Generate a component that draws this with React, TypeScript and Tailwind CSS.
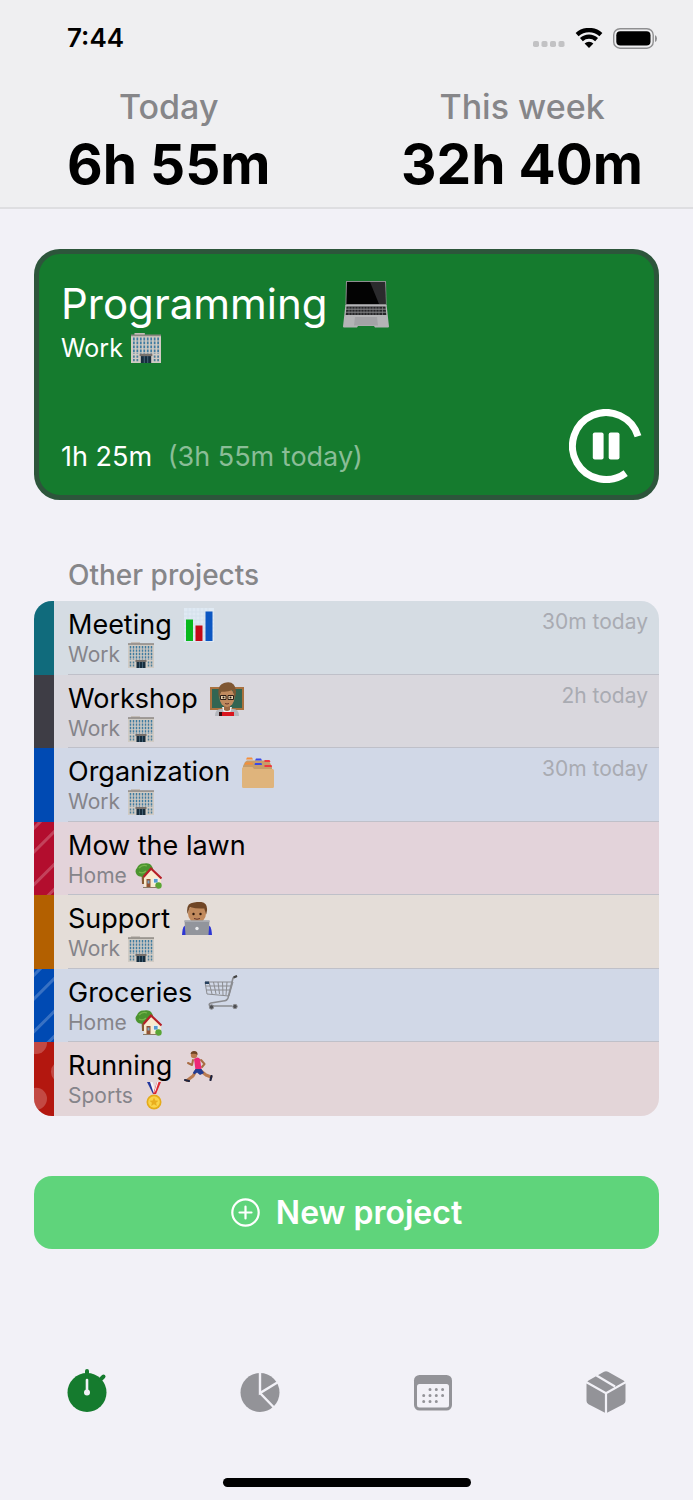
import type { ReactNode } from "react";

type EmojiProps = { className: string };

const Laptop = ({ className }: EmojiProps) => (
  <svg viewBox="0 0 46 47" className={className} role="img" aria-label="laptop">
    <path d="M3 0h40l.6 25H2.4z" fill="#8d8d8f" />
    <path d="M4 1h38l.6 22H3.4z" fill="#030303" />
    <path d="M27 1h15l.5 22H36z" fill="#2b2b2d" />
    <path d="M2.4 24h41.200L46 45.500q0 1-1 1H32l-1-1.500H15l-1 1.500H1q-1 0-1-1z" fill="#b4b4b6" />
    <path d="M3.500 25.500h39l.8 8.500H2.700z" fill="#262628" />
    <path d="M3 28.200h40M3 31.200h40" stroke="#a2a2a5" strokeWidth=".8" />
    <path d="M6 25.500v8.500M9 25.500v8.500M12 25.500v8.500M15 25.500v8.500M18 25.500v8.500M21 25.500v8.500M24 25.500v8.500M27 25.500v8.500M30 25.500v8.500M33 25.500v8.500M36 25.500v8.500M39.500 25.500v8.500" stroke="#8b8b8e" strokeWidth=".6" />
    <path d="M12 36h22l1 8.500H11z" fill="#a3a3a6" />
  </svg>
);

const Office = ({ className }: EmojiProps) => (
  <svg viewBox="0 0 26 26" className={className} role="img" aria-label="office">
    <path d="M3 0h9v2H3z" fill="#c4bdb7" />
    <path d="M0 2h26v24H0z" fill="#d0cbc4" />
    <path d="M0 1.300h26v1.500H0z" fill="#8c8783" />
    <path d="M2.500 4v14M5.500 4v14M8.500 4v14M11.500 4v14M14.500 4v14M17.500 4v14M20.500 4v14M23.500 4v14" stroke="#3f7ba0" strokeWidth="1.500" strokeDasharray="2.400 1" />
    <path d="M2.500 19.500v5M5.500 19.500v5M20.500 19.500v5M23.500 19.500v5" stroke="#4c7f9b" strokeWidth="1.500" strokeDasharray="2 1" />
    <path d="M7.500 18h11v2h-11z" fill="#77706b" />
    <path d="M8.500 20h9v6h-9z" fill="#172d3d" />
    <path d="M11.500 20v6M14.500 20v6" stroke="#54758a" strokeWidth=".7" />
  </svg>
);

const Chart = ({ className }: EmojiProps) => (
  <svg viewBox="0 0 30 34" className={className} role="img" aria-label="bar chart">
    <path d="M0 0h30v34H0z" fill="#dfe9f3" />
    <path d="M0 4h30M0 8h30M0 12h30M0 16h30M0 20h30M0 24h30M0 28h30M4 0v34M8 0v34M12 0v34M16 0v34M20 0v34M24 0v34" stroke="#d0deea" strokeWidth=".6" />
    <path d="M2 11.500h7V33H2z" fill="#08b91d" />
    <path d="M11.500 17.500h7V33h-7z" fill="#c30a17" />
    <path d="M21.500 3.500h7V33h-7z" fill="#0c57c2" />
  </svg>
);

const Teacher = ({ className }: EmojiProps) => (
  <svg viewBox="0 0 34 34" className={className} role="img" aria-label="teacher">
    <path d="M0 5h34v23H0z" fill="#a9713f" />
    <path d="M2 7h30v19H2z" fill="#326552" />
    <path d="M5 34q0-7 6-7h12q6 0 6 7z" fill="#b4b7bd" />
    <path d="M12 25h10l-2 6h-6z" fill="#eeeeee" />
    <path d="M10 30h14v4H10z" fill="#d9151e" />
    <path d="M9 30h3v4H9z" fill="#351012" />
    <path d="M14 22h6v6q-3 2-6 0z" fill="#9c6844" />
    <ellipse cx="17" cy="15.500" rx="7.500" ry="9.500" fill="#c08a5e" />
    <path d="M9 16Q6.500 3 14 1q11-3 12 8 0 5-1.500 7-.5-5-2-8-6 2.500-11 1.500-2 2-2.500 6.500z" fill="#7f5733" />
    <path d="M10.500 13.500h5.500v4h-5.500zM18 13.500h5.500v4H18z" fill="#ecd3ae" stroke="#2c1e18" strokeWidth="1" />
    <circle cx="13.500" cy="15.500" r="1" fill="#24150d" />
    <circle cx="20.500" cy="15.500" r="1" fill="#24150d" />
    <path d="M15 21.500q2 1 4 0" stroke="#65352a" strokeWidth="1" fill="none" />
  </svg>
);

const Folder = ({ className }: EmojiProps) => (
  <svg viewBox="0 0 32 31" className={className} role="img" aria-label="card index dividers">
    <path d="M3 5 5 3.500h22l3 6.500v5H1V9z" fill="#c79d69" />
    <path d="M5 .5h5l1 2H4zM3.500 5.500h7l.5 2H2.500z" fill="#f58e39" />
    <path d="M14 1.500h5l1 2h-7zM13 6h6.500l.5 2h-7.500z" fill="#3949e7" />
    <path d="M22.500 3h5l1 2h-6zM22.500 8h7l.5 2h-7.500z" fill="#ee3940" />
    <path d="M0 11.500q0-1.500 1.500-1.500h9l1.500 2h18.500q1.500 0 1.500 1.500v16q0 1.500-1.500 1.500h-29Q0 31 0 29.500z" fill="#dfb47c" />
  </svg>
);

const House = ({ className }: EmojiProps) => (
  <svg viewBox="0 0 27 26" className={className} role="img" aria-label="house with garden">
    <path d="M6.500 10h3l.5 11H7z" fill="#875a33" />
    <path d="M2 12Q-1 8 2 5 4 0 9 .5q6-1 8 3 3 4-1 8-4 3-7 2-5 1-7-1.500z" fill="#4b942f" />
    <path d="M4 5q4-4 8-2M4 9q4 2 7-1" stroke="#77b64b" strokeWidth="1.300" fill="none" />
    <path d="M9 13 17 6l9 9v9.500l-17-1z" fill="#f8ebcf" />
    <path d="M8.500 14 16 5.500l10.500 10" stroke="#b51f28" strokeWidth="2.200" fill="none" />
    <path d="M11.500 16h4v8h-4z" fill="#925333" />
    <path d="M12.500 17.500h2v3h-2z" fill="#78a5c5" />
    <path d="M18.500 15.500h4.500v4.500h-4.500z" fill="#559bd0" stroke="#fff" strokeWidth=".7" />
    <circle cx="23.500" cy="22.500" r="3.200" fill="#5aa535" />
    <path d="M8 24.500h14" stroke="#8b7b67" strokeWidth="1" />
  </svg>
);

const Technologist = ({ className }: EmojiProps) => (
  <svg viewBox="0 0 30 34" className={className} role="img" aria-label="technologist">
    <path d="M0 33q0-11 8-12h14q8 1 8 12z" fill="#2d36d3" />
    <path d="M11 17h8v6h-8z" fill="#99643f" />
    <ellipse cx="15" cy="11.500" rx="9" ry="9.500" fill="#c18a5d" />
    <path d="M5.500 12Q3.500 1 12 .5q14-3 13 8l-.8 4-2-6Q14 7 8 5q-1.500 3-2.500 7z" fill="#704626" />
    <circle cx="11.500" cy="12" r="1.200" fill="#2b160b" />
    <circle cx="18.500" cy="12" r="1.200" fill="#2b160b" />
    <path d="M12 16.500q3 1.500 6 0" stroke="#65352a" strokeWidth="1" fill="none" />
    <path d="M2.500 18.500h25L26.500 33h-23z" fill="#92959c" />
    <path d="M2.500 18.500h25v1.500h-25z" fill="#a9abb0" />
    <circle cx="15" cy="26.500" r="1.700" fill="#e9eaec" />
  </svg>
);

const Cart = ({ className }: EmojiProps) => (
  <svg viewBox="0 0 34 35" className={className} role="img" aria-label="shopping cart" fill="none" stroke="#8b8c90" strokeWidth="1">
    <path d="M1 7h28l-4 14-22-2zM2 11h26M2 15h25M5 7l3 12M9.500 7l2.500 12M14 7l1.500 12M18.500 7l.5 13M23 7l-1 13" />
    <path d="M33 1l-4 2-5 20q-1 3-5 3L7 28q-3 1-1 3h22" strokeWidth="1.600" />
    <path d="M33 1l-3.500 1.500" stroke="#444" strokeWidth="2" />
    <path d="M1 6.500h4v2.500H1z" fill="#26405e" stroke="none" />
    <circle cx="7.500" cy="32" r="2.200" fill="#4f5054" />
    <circle cx="31" cy="31.500" r="2.200" fill="#4f5054" />
  </svg>
);

const Runner = ({ className }: EmojiProps) => (
  <svg viewBox="0 0 29 31" className={className} role="img" aria-label="runner" fill="none" strokeLinecap="round" strokeLinejoin="round">
    <path d="M9 9l-1 5-4-2M17 9l3.500 4-2.500 3" stroke="#a96c43" strokeWidth="2" />
    <path d="M12 20l-3 5-6 4.500M17 20l5 4 5 2" stroke="#b97b50" strokeWidth="3" />
    <path d="M10 8q4-3 6 0l1.500 10-6 1z" fill="#ed2877" />
    <path d="M11.500 18h6l2.500 4-4 2-3-2.500-3 2-1-2z" fill="#223d93" />
    <circle cx="10" cy="4" r="3.200" fill="#b97b50" />
    <path d="M6.500 3Q7 0 10 0q4 0 3.500 4-2-2-7-1z" fill="#714524" />
    <path d="M1 29l4 1M27.500 25l-1 4" stroke="#20243e" strokeWidth="2.200" />
  </svg>
);

const Medal = ({ className }: EmojiProps) => (
  <svg viewBox="0 0 18 28" className={className} role="img" aria-label="medal">
    <path d="M2 0h4l5 12H8z" fill="#23379c" />
    <path d="M5 0h2.500L10 8 9 12z" fill="#f4f4f6" />
    <path d="M16 0h-4L8 12h3z" fill="#dc2732" />
    <path d="M12 0h1.500L10.500 9 9 11z" fill="#f4f4f6" />
    <circle cx="9" cy="20" r="7.500" fill="#e5ab1a" />
    <circle cx="9" cy="20" r="5.800" fill="#fad449" />
    <path d="m9 15.500 1.300 2.900 3.200.3-2.400 2.100.7 3.200L9 22.300 6.200 24l.7-3.200-2.400-2.100 3.200-.3z" fill="#e9ae1e" />
  </svg>
);

const Stripes = () => (
  <svg viewBox="0 0 20 74" className="h-0 min-h-full w-full" stroke="#fff" strokeOpacity=".22" strokeWidth="3" aria-hidden>
    <path d="M-2 8 8-2M-2 32 22 8M-2 65 22 41M-2 98 22 74M8 80 22 66" />
  </svg>
);

const Dots = () => (
  <svg viewBox="0 0 20 74" className="h-0 min-h-full w-full" fill="#fff" fillOpacity=".22" aria-hidden>
    <circle cx="2" cy="1" r="11" />
    <circle cx="28" cy="30" r="11" />
    <circle cx="2" cy="57" r="11" />
  </svg>
);

type Project = {
  name: string;
  icon?: ReactNode;
  group: "Work" | "Home" | "Sports";
  time?: string;
  strip: string;
  row: string;
  pattern?: ReactNode;
};

const projects: Project[] = [
  { name: "Meeting", icon: <Chart className="h-[34px] w-[30px]" />, group: "Work", time: "30m today", strip: "bg-[#106b7c]", row: "bg-[#d5dce3]" },
  { name: "Workshop", icon: <Teacher className="size-[34px]" />, group: "Work", time: "2h today", strip: "bg-[#3e3d45]", row: "bg-[#d9d7dd]" },
  { name: "Organization", icon: <Folder className="h-[31px] w-8" />, group: "Work", time: "30m today", strip: "bg-[#004ab3]", row: "bg-[#d1d8e7]" },
  { name: "Mow the lawn", group: "Home", strip: "bg-[#b30d2e]", row: "bg-[#e3d3da]", pattern: <Stripes /> },
  { name: "Support", icon: <Technologist className="h-[34px] w-[30px]" />, group: "Work", strip: "bg-[#b36000]", row: "bg-[#e4ddd8]" },
  { name: "Groceries", icon: <Cart className="h-[35px] w-[34px]" />, group: "Home", strip: "bg-[#004ab3]", row: "bg-[#d1d8e7]", pattern: <Stripes /> },
  { name: "Running", icon: <Runner className="h-[31px] w-[29px]" />, group: "Sports", strip: "bg-[#b3170f]", row: "bg-[#e3d5d8]", pattern: <Dots /> },
];

const groupIcons = {
  Work: <Office className="size-[26px]" />,
  Home: <House className="h-[26px] w-[27px]" />,
  Sports: <Medal className="mx-1 h-7 w-[18px]" />,
};

const StatusBar = () => (
  <div className="flex h-[76px] items-center justify-between pr-9 pl-[67px]">
    <span className="text-[26px] leading-8 font-semibold">7:44</span>
    <div className="flex items-center gap-[10px]">
      <svg viewBox="0 0 32 20" className="h-5 w-8" fill="#c2c2c4" aria-hidden>
        <rect x="0" y="13" width="6" height="6" rx="1.800" />
        <rect x="8.500" y="13" width="6" height="6" rx="1.800" />
        <rect x="17" y="13" width="6" height="6" rx="1.800" />
        <rect x="25.500" y="13" width="6" height="6" rx="1.800" />
      </svg>
      <svg viewBox="0 0 28 21" className="h-[21px] w-7" fill="none" stroke="#000" aria-hidden>
        <path d="M2.100 6.600a17.800 17.800 0 0 1 23.800 0" strokeWidth="4.400" />
        <path d="M6.400 11.600a11.200 11.200 0 0 1 15.200 0" strokeWidth="4.200" />
        <path d="M14 20 9.600 15.600a6.200 6.200 0 0 1 8.800 0z" fill="#000" stroke="none" />
      </svg>
      <svg viewBox="0 0 44 21" className="h-[21px] w-11" aria-hidden>
        <rect x=".7" y=".7" width="39.500" height="19.500" rx="6.300" fill="none" stroke="#8f8f91" strokeWidth="1.400" />
        <rect x="3.300" y="3.300" width="34.200" height="14.300" rx="4" />
        <path d="M42 7q2 1 2 3.500T42 14z" fill="#8f8f91" />
      </svg>
    </div>
  </div>
);

const Total = ({ label, value }: { label: string; value: string }) => (
  <div className="text-center">
    <h2 className="text-[34px] leading-[62px] font-medium text-[#868689]">{label}</h2>
    <p className="text-[55px] leading-[52px] font-bold">{value}</p>
  </div>
);

const CurrentProject = () => (
  <section className="flex min-h-[251px] flex-col justify-between rounded-[26px] border-[5px] border-[#2d553b] bg-[#157b2e] pt-6 pr-[11px] pb-3 pl-[22px] text-white">
    <div>
      <h1 className="flex items-center gap-[15px] text-[42px] leading-[52px]">
        Programming
        <Laptop className="h-[47px] w-[46px]" />
      </h1>
      <p className="flex items-center gap-2 text-[25px] leading-9">
        Work
        <Office className="size-[30px]" />
      </p>
    </div>
    <div className="flex items-end justify-between">
      <p className="pb-2 text-[27px] leading-9">
        1h 25m <span className="ml-2 text-[#8abd97]">(3h 55m today)</span>
      </p>
      <button type="button" aria-label="Pause">
        <svg viewBox="0 0 74 74" className="size-[74px]" fill="#fff" aria-hidden>
          <path d="M56.700 64.100A33.500 33.500 0 1 1 69 27.200" fill="none" stroke="#fff" strokeWidth="7" />
          <rect x="23.800" y="23.500" width="10.800" height="27" rx="2" />
          <rect x="39.700" y="23.500" width="10.800" height="27" rx="2" />
        </svg>
      </button>
    </div>
  </section>
);

const ProjectRow = ({ project, last }: { project: Project; last: boolean }) => (
  <li className={`flex ${project.row}`}>
    <div className={`w-5 shrink-0 overflow-hidden ${project.strip}`}>{project.pattern}</div>
    <div className={`ml-[14px] flex flex-1 justify-between pt-[7px] pr-[11px] ${last ? "" : "border-b border-[#bfc0c9]"}`}>
      <div>
        <h3 className="flex h-[34px] items-center gap-3 text-[27px] leading-[34px]">
          {project.name}
          {project.icon}
        </h3>
        <p className="flex h-[26px] items-center gap-2 text-[21px] leading-[26px] text-[#85848a]">
          {project.group}
          {groupIcons[project.group]}
        </p>
      </div>
      {project.time && <span className="text-[21px] leading-7 text-[#a9abb2]">{project.time}</span>}
    </div>
  </li>
);

const TabBar = () => (
  <nav className="mt-auto grid grid-cols-4 pb-[65px]">
    <a href="#timer" aria-label="Timer" className="flex justify-center">
      <svg viewBox="0 0 40 45" className="h-[45px] w-10" fill="#157b2e" strokeLinecap="round" aria-hidden>
        <circle cx="20" cy="24.500" r="19.500" />
        <path d="M20 3v5M33.500 11.500l3-3" stroke="#157b2e" strokeWidth="4" />
        <path d="M20 12v12" stroke="#f2f1f7" strokeWidth="2.600" />
        <circle cx="20" cy="24.500" r="3" fill="#f2f1f7" />
      </svg>
    </a>
    <a href="#statistics" aria-label="Statistics" className="flex justify-center">
      <svg viewBox="0 0 40 45" className="h-[45px] w-10" fill="#939398" aria-hidden>
        <circle cx="20" cy="24.500" r="19.500" />
        <path d="M20 4v21l19-11.500M20 25l14.500 15" fill="none" stroke="#f2f1f7" strokeWidth="2.400" />
      </svg>
    </a>
    <a href="#calendar" aria-label="Calendar" className="flex justify-center">
      <svg viewBox="0 0 40 45" className="h-[45px] w-10" fill="#939398" aria-hidden>
        <rect x="1" y="7" width="38" height="35.500" rx="5.500" />
        <rect x="4" y="16" width="32" height="23.500" rx="2.500" fill="#f2f1f7" />
        <path d="M17 21.500h.01M23.300 21.500h.01M29.600 21.500h.01M10.700 27.500h.01M17 27.500h.01M23.300 27.500h.01M29.600 27.500h.01M10.700 33.600h.01M17 33.600h.01M23.300 33.600h.01" stroke="#939398" strokeWidth="3" strokeLinecap="round" />
      </svg>
    </a>
    <a href="#projects" aria-label="Projects" className="flex justify-center">
      <svg viewBox="0 0 40 45" className="h-[45px] w-10" fill="#939398" aria-hidden>
        <path d="M18 3.800q2-1.100 4 0l15.500 8.800q2 1.200 2 3.400v17q0 2-2 3.200L22 44.300q-2 1.100-4 0L2.500 36.200q-2-1.200-2-3.200V16q0-2.200 2-3.400z" />
        <path d="M0 14l20 11.300L40 14M20 25.300V45M10.500 7.500 29 18.500" fill="none" stroke="#f2f1f7" strokeWidth="2.200" />
      </svg>
    </a>
  </nav>
);

export default function App() {
  return (
    <div className="flex min-h-screen flex-col bg-[#f2f1f7] font-[Inter,'Liberation_Sans',sans-serif] text-black">
      <header className="border-b-2 border-[#dedee1] bg-[#efeff1] pb-[17px]">
        <StatusBar />
        <div className="flex justify-between pr-[50px] pl-[67px]">
          <Total label="Today" value="6h 55m" />
          <Total label="This week" value="32h 40m" />
        </div>
      </header>
      <main className="px-[34px] pt-10">
        <CurrentProject />
        <h2 className="mt-[57px] pl-[34px] text-[28px] leading-9 font-medium text-[#868689]">Other projects</h2>
        <ul className="mt-2 grid min-h-[515px] auto-rows-fr overflow-hidden rounded-[18px]">
          {projects.map((project, index) => (
            <ProjectRow key={project.name} project={project} last={index === projects.length - 1} />
          ))}
        </ul>
        <button
          type="button"
          className="mt-[60px] flex w-full items-center justify-center gap-4 rounded-[18px] bg-[#5fd47b] py-4 text-[32px] leading-[41px] font-semibold text-white"
        >
          <svg viewBox="0 0 29 29" className="size-[29px]" fill="none" stroke="#fff" strokeWidth="2.200" strokeLinecap="round" aria-hidden>
            <circle cx="14.500" cy="14.500" r="13.200" />
            <path d="M14.500 8.500v12M8.500 14.500h12" />
          </svg>
          New project
        </button>
      </main>
      <TabBar />
      <div className="mx-auto mb-[13px] h-[9px] w-[248px] rounded-full bg-black" />
    </div>
  );
}
